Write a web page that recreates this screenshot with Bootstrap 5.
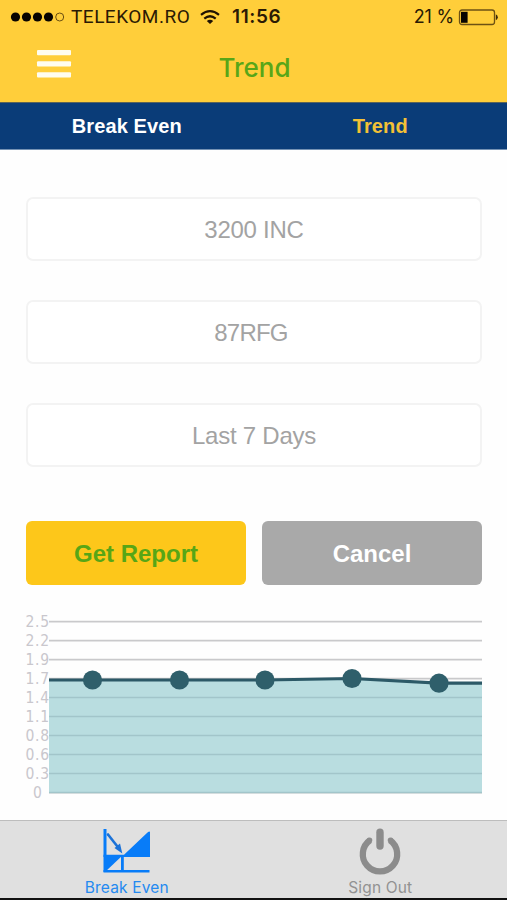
<!DOCTYPE html>
<html lang="en">
<head>
<meta charset="utf-8">
<meta name="viewport" content="width=device-width, initial-scale=1">
<title>Trend</title>
<link href="https://cdn.jsdelivr.net/npm/bootstrap@5.3.0/dist/css/bootstrap.min.css" rel="stylesheet">
<style>
body{font-family:"Liberation Sans",Arial,sans-serif;background:#fefefe;height:900px;overflow:hidden}
svg{display:block;flex:none;overflow:visible}
.top-area{background:#ffce3a;height:102px}
.status-row{height:34px;padding:0 9px 0 10px;font:18px/34px Inter,sans-serif;color:#2b1a04;white-space:nowrap}
.carrier{width:121px;margin-left:5px;letter-spacing:.5px;font-family:Roboto,sans-serif;font-size:19px}
.clock{margin-left:12px;font-weight:600;font-size:19px;letter-spacing:.6px}
.percent{letter-spacing:-.2px}
.title-row{height:66px;display:grid;grid-template-columns:107px 1fr 105px}
.page-title{font:500 26px/67px Inter,sans-serif;color:#58a618;text-align:center}
.menu-btn{padding:0 0 8px 37px}
.sub-tabs{height:48px;background:#0a3c78;border-top:1px solid #5c6458;border-bottom:1px solid #7592b4;font-weight:700;font-size:20px}
.sub-tabs .nav-link{color:#fff;padding:0;line-height:47px;letter-spacing:.1px}
.sub-tabs .nav-link.active{color:#f3c136}
.form-area{padding:47px 25px 0 26px}
.pick{height:64px;margin-bottom:39px;border:2px solid #f3f3f3;border-radius:7px;background:#fff;color:#a3a3a3!important;font-size:24px;letter-spacing:-.25px;text-align:center;padding:2px 0 0}
.pick-code{letter-spacing:-.8px;padding-right:6px}
.actions{margin-top:54px;gap:16px}
.actions .btn{height:64px;border:0;border-radius:6px;font-weight:700;font-size:24px;padding:2px 0 0}
.go{background:#fdc71a;color:#57a616}
.stop{background:#a9a9a9;color:#fff}
.chart-svg{margin-left:20px}
.chart-svg text{font:15.5px "DejaVu Sans Condensed","DejaVu Sans",sans-serif;fill:#c9c7cd}
.tab-bar{height:80px;background:#e0e0e0;border-top:1px solid #bdbdbd;border-bottom:2px solid #111}
.tab-bar a{color:#929292;font:15.5px/18px Inter,sans-serif;text-decoration:none}
.tab-bar a.active{color:#258af0}
.tab-label{margin-top:6px;letter-spacing:.15px}
</style>
<script src="https://cdn.jsdelivr.net/npm/bootstrap@5.3.0/dist/js/bootstrap.bundle.min.js"></script>
</head>
<body class="d-flex flex-column">
<header class="top-area">
  <div class="status-row d-flex align-items-center">
    <svg width="56" height="12" viewBox="0 0 56 12"><g fill="#080400"><circle cx="5.5" cy="6" r="4.6"/><circle cx="16.5" cy="6" r="4.6"/><circle cx="27.5" cy="6" r="4.6"/><circle cx="38.5" cy="6" r="4.6"/></g><circle cx="49.7" cy="6" r="4" fill="none" stroke="#6b4f10"/></svg>
    <span class="carrier">TELEKOM.RO</span>
    <svg width="20" height="15" viewBox="0 0 20 15" style="margin-left:8px"><g fill="none" stroke="#201203" stroke-width="2.2"><path d="M1 4.8Q10-2.6 19 4.8"/><path d="M4.3 8.6Q10 3.9 15.7 8.6"/></g><path d="M6.8 11Q10 8.4 13.2 11L10 14Z" fill="#201203"/></svg>
    <span class="clock">11:56</span>
    <span class="ms-auto percent">21 %</span>
    <svg class="ms-1" width="40" height="17" viewBox="0 0 40 17"><rect x="1.5" y="1" width="35" height="14.5" rx="2.5" fill="none" stroke="#6d5113" stroke-width="1.3"/><path d="M3 2.8h6.6v11H3z" fill="#080400"/><path d="M37.8 5.3q2 1 2 3t-2 3z" fill="#3b2807"/></svg>
  </div>
  <div class="title-row">
    <button class="btn border-0 menu-btn" aria-label="Menu"><svg width="34" height="30" viewBox="0 0 34 30"><g fill="#fffdf0"><rect y="1" width="34" height="5.3" rx="1"/><rect y="12.2" width="34" height="5.3" rx="1"/><rect y="23.3" width="34" height="5.3" rx="1"/></g></svg></button>
    <div class="page-title">Trend</div>
  </div>
</header>
<nav class="sub-tabs nav nav-justified flex-nowrap">
  <a class="nav-link w-50" href="#">Break Even</a>
  <a class="nav-link w-50 active" href="#">Trend</a>
</nav>
<main class="flex-grow-1">
  <div class="form-area">
    <input class="form-control pick" value="3200 INC" aria-label="Site">
    <input class="form-control pick pick-code" value="87RFG" aria-label="Product">
    <input class="form-control pick" value="Last 7 Days" aria-label="Period">
    <div class="d-flex actions">
      <button class="btn go w-50">Get Report</button>
      <button class="btn stop w-50">Cancel</button>
    </div>
  </div>
  <svg class="chart-svg" width="470" height="220" viewBox="20 585 470 220">
    <g stroke="#c9c9cb" stroke-width="1.6"><path d="M49 621.6H482M49 640.6H482M49 659.6H482M49 678.6H482M49 697.6H482M49 716.6H482M49 735.5H482M49 754.6H482M49 773.6H482M49 792.6H482"/></g>
    <path d="M49 680L265 680L352 678.5L439 683.2H482V793H49Z" fill="#b9dde0"/>
    <path d="M49 697.6H482M49 716.6H482M49 735.5H482M49 754.6H482M49 773.6H482M49 792.6H482" stroke="#a2c5ca" stroke-width="1.5"/>
    <path d="M49 680L265 680L352 678.5L439 683.2H482" fill="none" stroke="#2c5967" stroke-width="3.2"/>
    <g fill="#2f5f6b"><circle cx="92.5" cy="680" r="9.6"/><circle cx="179.5" cy="680" r="9.6"/><circle cx="265" cy="680" r="9.6"/><circle cx="352" cy="678.5" r="9.6"/><circle cx="439" cy="683.2" r="9.6"/></g>
    <g><text x="25.5" y="627.3" textLength="23.5">2.5</text><text x="25.5" y="646.3" textLength="23.5">2.2</text><text x="25.5" y="665.3" textLength="23.5">1.9</text><text x="25.5" y="684.3" textLength="23.5">1.7</text><text x="25.5" y="703.3" textLength="23.5">1.4</text><text x="25.5" y="722.3" textLength="23.5">1.1</text><text x="25.5" y="741.3" textLength="23.5">0.8</text><text x="25.5" y="760.3" textLength="23.5">0.6</text><text x="25.5" y="779.3" textLength="23.5">0.3</text><text x="33" y="798.3">0</text></g>
  </svg>
</main>
<footer class="tab-bar d-flex">
  <a class="active w-50 d-flex flex-column align-items-center" href="#">
    <svg width="50" height="52" viewBox="0 0 50 52"><g fill="#087cf8"><path d="M1.5 8h3v43h-3z"/><path d="M45.5 11.5q2.5-2 2.5 0V36H1.5v-2.3H22Z"/><path d="M3 34h18L3 51z"/><path d="M1.5 49h46v2.6H1.5zM19 34h2.8v17H19z"/></g><path d="M6 13.5L17 27.5" stroke="#1b72d8" stroke-width="2.6" stroke-linecap="round"/><path d="M20.3 32.5L12.5 27L18 22.5Z" fill="#1b72d8"/></svg>
    <span class="tab-label">Break Even</span>
  </a>
  <a class="w-50 d-flex flex-column align-items-center" href="#">
    <svg width="44" height="52" viewBox="0 0 44 52"><path d="M12.1 19.2A17.2 17.2 0 1 0 31.9 19.2" fill="none" stroke="#8c8c8c" stroke-width="6.3"/><circle cx="11.6" cy="19.1" r="2.7" fill="#8c8c8c"/><circle cx="32.4" cy="19.1" r="2.7" fill="#8c8c8c"/><path d="M22 11.2V25" stroke="#8c8c8c" stroke-width="7.4" stroke-linecap="round"/></svg>
    <span class="tab-label">Sign Out</span>
  </a>
</footer>
</body>
</html>
